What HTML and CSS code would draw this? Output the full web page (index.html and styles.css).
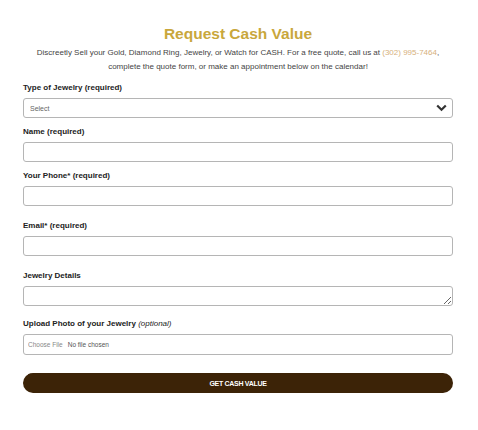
FILE: index.html
```html
<!DOCTYPE html>
<html lang="en">
<head>
    <meta charset="UTF-8">
    <meta name="viewport" content="width=device-width, initial-scale=1.0">
    <title>Request Cash Value</title>
    <link rel="stylesheet" href="styles.css">
</head>
<body>
    <div class="quote">
        <h1 class="quote-title">Request Cash Value</h1>
        <p class="quote-intro">Discreetly Sell your Gold, Diamond Ring, Jewelry, or Watch for CASH. For a free quote, call us at <a href="#" class="phone">(302) 995-7464</a>,<br>complete the quote form, or make an appointment below on the calendar!</p>

        <form class="quote-form" onsubmit="return false;">
            <div class="field">
                <label for="type">Type of Jewelry (required)</label>
                <div class="select-wrap">
                    <select id="type">
                        <option>Select</option>
                        <option>Gold</option>
                        <option>Diamond Ring</option>
                        <option>Watch</option>
                    </select>
                    <svg class="chevron" width="11" height="8" viewBox="0 0 11 8"><path d="M1.2 1.5 L5.5 5.8 L9.8 1.5" fill="none" stroke="#333" stroke-width="2.2"/></svg>
                </div>
            </div>

            <div class="field">
                <label for="name">Name (required)</label>
                <input type="text" id="name">
            </div>

            <div class="field field-wide">
                <label for="phone">Your Phone* (required)</label>
                <input type="tel" id="phone">
            </div>

            <div class="field field-wide">
                <label for="email">Email* (required)</label>
                <input type="email" id="email">
            </div>

            <div class="field field-mid">
                <label for="details">Jewelry Details</label>
                <textarea id="details"></textarea>
            </div>

            <div class="field field-last">
                <label for="photo">Upload Photo of your Jewelry <em>(optional)</em></label>
                <div class="file-box">
                    <input type="file" id="photo">
                </div>
            </div>

            <button type="submit" class="submit">GET CASH VALUE</button>
        </form>
    </div>
</body>
</html>
```

FILE: styles.css
```css
body {
    margin: 0;
    font-family: 'Liberation Sans', Arial, sans-serif;
    color: #333;
    background: #fff;
}
.quote {
    width: 430px;
    padding: 24px 25px 0 23px;
}
.quote-title {
    margin: 0;
    font-size: 15.5px;
    line-height: 19px;
    text-align: center;
    color: #c9a73c;
}
.quote-intro {
    margin: 3px 0 8px;
    font-size: 8px;
    line-height: 14px;
    text-align: center;
    color: #444;
}
.phone {
    color: #d6b07c;
    text-decoration: none;
}
.field {
    margin-bottom: 8px;
}
.field-wide {
    margin-bottom: 14px;
}
.field-mid {
    margin-bottom: 12px;
}
.field-last {
    margin-bottom: 18px;
}
.field label {
    display: block;
    margin-bottom: 4px;
    font-size: 8px;
    line-height: 12px;
    font-weight: bold;
    color: #222;
}
.field label em {
    font-weight: normal;
}
.field input[type="text"],
.field input[type="tel"],
.field input[type="email"],
.field textarea,
.select-wrap select,
.file-box {
    box-sizing: border-box;
    display: block;
    width: 100%;
    height: 20px;
    margin: 0;
    padding: 0 6px;
    border: 1px solid #b5b5b5;
    border-radius: 3px;
    background: #fff;
    font-family: inherit;
    font-size: 7px;
    color: #666;
}
.field textarea {
    resize: vertical;
}
.select-wrap {
    position: relative;
}
.select-wrap select {
    appearance: none;
    -webkit-appearance: none;
}
.chevron {
    position: absolute;
    right: 6px;
    top: 6px;
    pointer-events: none;
}
.file-box {
    display: flex;
    align-items: center;
    height: 21px;
    padding: 0 4px;
}
.file-box input {
    font-family: inherit;
    font-size: 6.5px;
    color: #555;
}
.file-box input::file-selector-button {
    border: none;
    background: none;
    padding: 0;
    margin-right: 5px;
    font-family: inherit;
    font-size: 6.5px;
    color: #888;
}
.submit {
    display: block;
    width: 100%;
    height: 20px;
    border: none;
    border-radius: 10px;
    background: #3c2307;
    color: #fff;
    font-family: inherit;
    font-size: 7px;
    font-weight: bold;
    letter-spacing: -0.3px;
    cursor: pointer;
}
```
